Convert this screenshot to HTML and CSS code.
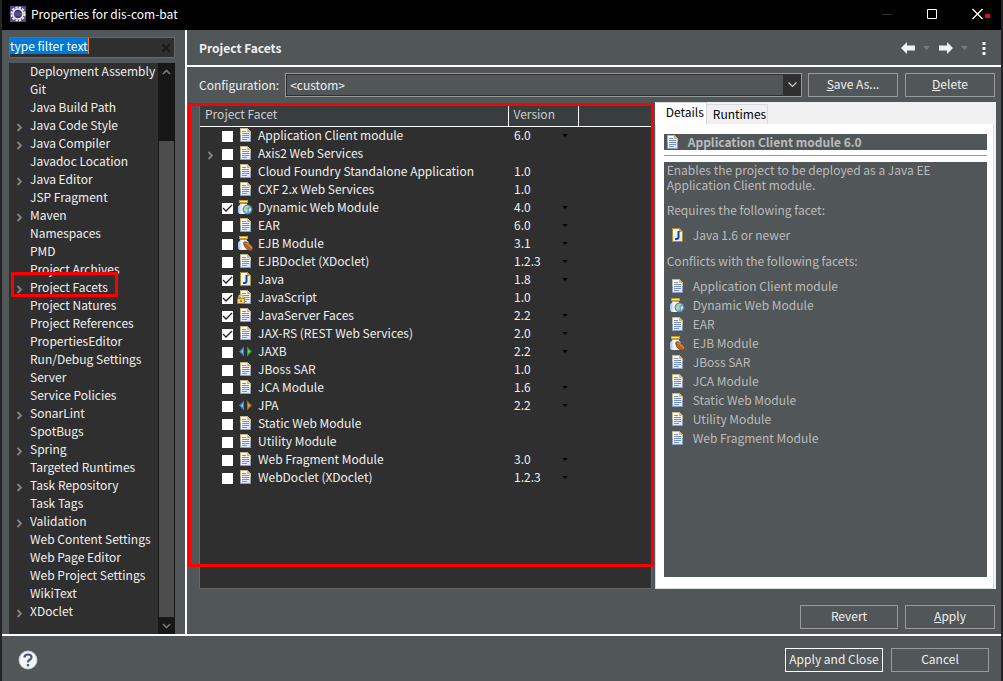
FILE: index.html
```html
<!DOCTYPE html>
<html lang="en">
<head>
<meta charset="utf-8">
<title>Properties for dis-com-bat</title>
<link rel="stylesheet" href="styles.css">
</head>
<body>
<svg width="0" height="0" class="defs" aria-hidden="true">
  <defs>
    <linearGradient id="paper" x1="0" y1="0" x2="1" y2="1"><stop offset="0" stop-color="#fff"/><stop offset="1" stop-color="#d6e2f6"/></linearGradient>
    <linearGradient id="glass" x1="0" y1="0" x2="1" y2="0"><stop offset="0" stop-color="#9fb9e0"/><stop offset=".4" stop-color="#fff"/><stop offset="1" stop-color="#b8cbe8"/></linearGradient>
    <symbol id="doc" viewBox="0 0 16 16"><path d="M3.5 1.5h7l3 3v10h-10z" fill="url(#paper)" stroke="#8c9dc0"/><path d="M3.5 8V1.5h7l3 3V8" fill="none" stroke="#cdb87c"/><path d="M10 1l4 4h-4z" fill="#dcb765"/><path d="M5 4.5h4M5 6.5h7M5 8.500h7M5 10.500h7M5 12.500h5" stroke="#7590c8"/></symbol>
    <symbol id="jar" viewBox="0 0 16 16"><path d="M3 4.500h7v1l2 2v6l-1 1.500H2.500l-1.500-1.500v-6l2-2z" fill="url(#glass)"/><path d="M2 1h9v3H2z" fill="#c89b2c"/><path d="M3 2.500h7" stroke="#fff0ae"/></symbol>
    <symbol id="web" viewBox="0 0 16 16"><use href="#jar"/><circle cx="10.500" cy="10.500" r="4.500" fill="#6ba6d4" stroke="#5a80ac"/><path d="M8 8c2-2 4-1 4 0l-2 1 1 3-2 2-2-3z" fill="#b2d89a"/><path d="M12 10l2-1v2l-2 2z" fill="#d6edc8"/></symbol>
    <symbol id="ejb" viewBox="0 0 16 16"><use href="#jar"/><path d="M7 7c3-1 8 3 9 7-1 2-4 2-6 0-2-1-4-5-3-7z" fill="#ad6429" stroke="#70370f" stroke-width=".7"/><path d="M8 8c3 0 4 4 7 5M10 7c1 3 4 3 5 6" stroke="#d99561" stroke-width=".8" fill="none"/></symbol>
    <symbol id="java" viewBox="0 0 16 16"><path d="M3.500 1.500h7l3 3v10h-10z" fill="url(#paper)" stroke="#b48a35"/><path d="M10 1l4 4h-4z" fill="#d69b2f"/><path d="M9.500 4v6q0 2-2 2H6" fill="none" stroke="#174d86" stroke-width="2"/></symbol>
    <symbol id="lock" viewBox="0 0 16 16"><use href="#doc"/><path d="M2 10V8q0-2 2-2t2 2v2" fill="none" stroke="#d7bd68" stroke-width="1.500"/><path d="M.500 9.500h7v5h-7z" fill="#ead27c" stroke="#a88225"/><path d="M4 11v2" stroke="#614919"/></symbol>
    <symbol id="jaxb" viewBox="0 0 16 16"><path d="M2 8.500l5-5v10z" fill="#4485ca"/><path d="M4 8.500l2-2v4z" fill="#96c2ee"/><path d="M15 8.500l-5-5v10z" fill="#24a638"/><path d="M13 8.500l-2-2v4z" fill="#70d673"/></symbol>
    <symbol id="jpa" viewBox="0 0 16 16"><path d="M2 8.500l5-5v10z" fill="#4485ca"/><path d="M4 8.500l2-2v4z" fill="#96c2ee"/><path d="M15 8.500l-5-5v10z" fill="#a97129"/><path d="M13 8.500l-2-2v4z" fill="#eaac50"/></symbol>
    <symbol id="chev" viewBox="0 0 7 9"><path d="M1.500 1l3.500 3.500L1.500 8" fill="none" stroke="#858585" stroke-width="1.800"/></symbol>
    <symbol id="arrow" viewBox="0 0 14 12"><path d="M0 6l6-6v3.500h8v5H6V12z" fill="#f2f2f2"/></symbol>
    <symbol id="tri" viewBox="0 0 7 4"><path d="M0 0h7L3.500 4z" fill="currentColor"/></symbol>
  </defs>
</svg>
<div class="window">
  <header class="titlebar">
    <svg class="logo" width="16" height="16" viewBox="0 0 16 16"><path fill="#594589" d="M0 0h16v16H0z"/><circle cx="8" cy="8" r="6.500" fill="none" stroke="#eee" stroke-width="2" stroke-dasharray="2.200 1.200"/><circle cx="8" cy="8" r="5" fill="#42376b" stroke="#eee" stroke-width="1.500"/><path d="M4 7h8M4 9h8" stroke="#7e70a8" stroke-width=".8"/></svg>
    <span class="window-name">Properties for dis-com-bat</span>
    <button class="icon-button" aria-label="Minimize"><svg width="10" height="12"><path d="M0 6.500h10" stroke="#333"/></svg></button>
    <button class="icon-button" aria-label="Maximize"><svg width="10" height="10"><path d="M.5.5h9v9h-9z" fill="none" stroke="#fff"/></svg></button>
    <button class="icon-button close" aria-label="Close"><svg width="18" height="12"><path d="M.500 1l10 10M10.500 1l-10 10" stroke="#fff" stroke-width="1.300"/><path d="M13 6h5v4h-5z" fill="#f00"/></svg></button>
  </header>
  <div class="body">
    <aside class="sidebar">
      <div class="filter"><input type="text" value="type filter text" aria-label="Filter" class="filter-input"><button class="icon-button" aria-label="Clear"><svg width="8" height="8"><path d="M.500.500l7 7M7.500.500l-7 7" stroke="#151515" stroke-width="1.400"/></svg></button></div>
      <div class="tree">
        <ul class="tree-list">
          <li><a href="#">Deployment Assembly</a></li>
          <li><a href="#">Git</a></li>
          <li><a href="#">Java Build Path</a></li>
          <li><svg class="chev"><use href="#chev"/></svg><a href="#">Java Code Style</a></li>
          <li><svg class="chev"><use href="#chev"/></svg><a href="#">Java Compiler</a></li>
          <li><a href="#">Javadoc Location</a></li>
          <li><svg class="chev"><use href="#chev"/></svg><a href="#">Java Editor</a></li>
          <li><a href="#">JSP Fragment</a></li>
          <li><svg class="chev"><use href="#chev"/></svg><a href="#">Maven</a></li>
          <li><a href="#">Namespaces</a></li>
          <li><a href="#">PMD</a></li>
          <li><a href="#">Project Archives</a></li>
          <li class="marked"><svg class="chev"><use href="#chev"/></svg><a href="#">Project Facets</a></li>
          <li><a href="#">Project Natures</a></li>
          <li><a href="#">Project References</a></li>
          <li><a href="#">PropertiesEditor</a></li>
          <li><a href="#">Run/Debug Settings</a></li>
          <li><a href="#">Server</a></li>
          <li><a href="#">Service Policies</a></li>
          <li><svg class="chev"><use href="#chev"/></svg><a href="#">SonarLint</a></li>
          <li><a href="#">SpotBugs</a></li>
          <li><svg class="chev"><use href="#chev"/></svg><a href="#">Spring</a></li>
          <li><a href="#">Targeted Runtimes</a></li>
          <li><svg class="chev"><use href="#chev"/></svg><a href="#">Task Repository</a></li>
          <li><a href="#">Task Tags</a></li>
          <li><svg class="chev"><use href="#chev"/></svg><a href="#">Validation</a></li>
          <li><a href="#">Web Content Settings</a></li>
          <li><a href="#">Web Page Editor</a></li>
          <li><a href="#">Web Project Settings</a></li>
          <li><a href="#">WikiText</a></li>
          <li><svg class="chev"><use href="#chev"/></svg><a href="#">XDoclet</a></li>
        </ul>
        <div class="scrollbar">
          <button class="icon-button" aria-label="Scroll up"><svg width="9" height="6"><path d="M1 5l3.500-3.500L8 5" fill="none" stroke="#777" stroke-width="1.600"/></svg></button>
          <div class="thumb"></div>
          <button class="icon-button" aria-label="Scroll down"><svg width="9" height="6"><path d="M1 1l3.500 3.500L8 1" fill="none" stroke="#777" stroke-width="1.600"/></svg></button>
        </div>
      </div>
    </aside>
    <main class="main">
      <div class="page-head">
        <h1>Project Facets</h1>
        <button class="icon-button" aria-label="Back"><svg width="14" height="12"><use href="#arrow"/></svg></button>
        <button class="icon-button drop" aria-label="Back history"><svg width="7" height="4"><use href="#tri"/></svg></button>
        <button class="icon-button" aria-label="Forward"><svg width="14" height="12" class="flip"><use href="#arrow"/></svg></button>
        <button class="icon-button drop" aria-label="Forward history"><svg width="7" height="4"><use href="#tri"/></svg></button>
        <button class="icon-button more" aria-label="More"><svg width="4" height="14"><path d="M.500 1h3v3h-3zM.500 6h3v3h-3zM.500 11h3v3h-3z" fill="#f4f4f4"/></svg></button>
      </div>
      <div class="config">
        <label for="cfg">Configuration:</label>
        <div class="combo"><select id="cfg"><option>&lt;custom&gt;</option></select><svg class="combo-arrow" width="9" height="6"><path d="M.500.500l4 4 4-4" fill="none" stroke="#ccc" stroke-width="1.200"/></svg></div>
        <button class="button"><u>S</u>ave As...</button>
        <button class="button"><u>D</u>elete</button>
      </div>
      <div class="panels">
        <section class="facets">
          <table>
            <colgroup><col class="c-name"><col class="c-version"><col></colgroup>
            <thead><tr><th>Project Facet</th><th>Version</th><th></th></tr></thead>
            <tbody>
              <tr><td><label><input type="checkbox"><svg class="ico"><use href="#doc"/></svg>Application Client module</label></td><td>6.0<svg class="vd"><use href="#tri"/></svg></td><td></td></tr>
              <tr><td><svg class="chev"><use href="#chev"/></svg><label><input type="checkbox"><svg class="ico"><use href="#doc"/></svg>Axis2 Web Services</label></td><td></td><td></td></tr>
              <tr><td><label><input type="checkbox"><svg class="ico"><use href="#doc"/></svg>Cloud Foundry Standalone Application</label></td><td>1.0</td><td></td></tr>
              <tr><td><label><input type="checkbox"><svg class="ico"><use href="#doc"/></svg>CXF 2.x Web Services</label></td><td>1.0</td><td></td></tr>
              <tr><td><label><input type="checkbox" checked><svg class="ico"><use href="#web"/></svg>Dynamic Web Module</label></td><td>4.0<svg class="vd"><use href="#tri"/></svg></td><td></td></tr>
              <tr><td><label><input type="checkbox"><svg class="ico"><use href="#doc"/></svg>EAR</label></td><td>6.0<svg class="vd"><use href="#tri"/></svg></td><td></td></tr>
              <tr><td><label><input type="checkbox"><svg class="ico"><use href="#ejb"/></svg>EJB Module</label></td><td>3.1<svg class="vd"><use href="#tri"/></svg></td><td></td></tr>
              <tr><td><label><input type="checkbox"><svg class="ico"><use href="#doc"/></svg>EJBDoclet (XDoclet)</label></td><td>1.2.3<svg class="vd"><use href="#tri"/></svg></td><td></td></tr>
              <tr><td><label><input type="checkbox" checked><svg class="ico"><use href="#java"/></svg>Java</label></td><td>1.8<svg class="vd"><use href="#tri"/></svg></td><td></td></tr>
              <tr><td><label><input type="checkbox" checked><svg class="ico"><use href="#lock"/></svg>JavaScript</label></td><td>1.0</td><td></td></tr>
              <tr><td><label><input type="checkbox" checked><svg class="ico"><use href="#doc"/></svg>JavaServer Faces</label></td><td>2.2<svg class="vd"><use href="#tri"/></svg></td><td></td></tr>
              <tr><td><label><input type="checkbox" checked><svg class="ico"><use href="#doc"/></svg>JAX-RS (REST Web Services)</label></td><td>2.0<svg class="vd"><use href="#tri"/></svg></td><td></td></tr>
              <tr><td><label><input type="checkbox"><svg class="ico"><use href="#jaxb"/></svg>JAXB</label></td><td>2.2<svg class="vd"><use href="#tri"/></svg></td><td></td></tr>
              <tr><td><label><input type="checkbox"><svg class="ico"><use href="#doc"/></svg>JBoss SAR</label></td><td>1.0</td><td></td></tr>
              <tr><td><label><input type="checkbox"><svg class="ico"><use href="#doc"/></svg>JCA Module</label></td><td>1.6<svg class="vd"><use href="#tri"/></svg></td><td></td></tr>
              <tr><td><label><input type="checkbox"><svg class="ico"><use href="#jpa"/></svg>JPA</label></td><td>2.2<svg class="vd"><use href="#tri"/></svg></td><td></td></tr>
              <tr><td><label><input type="checkbox"><svg class="ico"><use href="#doc"/></svg>Static Web Module</label></td><td></td><td></td></tr>
              <tr><td><label><input type="checkbox"><svg class="ico"><use href="#doc"/></svg>Utility Module</label></td><td></td><td></td></tr>
              <tr><td><label><input type="checkbox"><svg class="ico"><use href="#doc"/></svg>Web Fragment Module</label></td><td>3.0<svg class="vd"><use href="#tri"/></svg></td><td></td></tr>
              <tr><td><label><input type="checkbox"><svg class="ico"><use href="#doc"/></svg>WebDoclet (XDoclet)</label></td><td>1.2.3<svg class="vd"><use href="#tri"/></svg></td><td></td></tr>
            </tbody>
          </table>
        </section>
        <section class="details">
          <div class="tabs"><button class="tab active">Details</button><button class="tab">Runtimes</button></div>
          <div class="tab-page">
            <h2><svg class="ico"><use href="#doc"/></svg>Application Client module 6.0</h2>
            <hr>
            <div class="description">
              <p>Enables the project to be deployed as a Java EE Application Client module.</p>
              <p>Requires the following facet:</p>
              <ul><li><svg class="ico"><use href="#java"/></svg>Java 1.6 or newer</li></ul>
              <p>Conflicts with the following facets:</p>
              <ul>
                <li><svg class="ico"><use href="#doc"/></svg>Application Client module</li>
                <li><svg class="ico"><use href="#web"/></svg>Dynamic Web Module</li>
                <li><svg class="ico"><use href="#doc"/></svg>EAR</li>
                <li><svg class="ico"><use href="#ejb"/></svg>EJB Module</li>
                <li><svg class="ico"><use href="#doc"/></svg>JBoss SAR</li>
                <li><svg class="ico"><use href="#doc"/></svg>JCA Module</li>
                <li><svg class="ico"><use href="#doc"/></svg>Static Web Module</li>
                <li><svg class="ico"><use href="#doc"/></svg>Utility Module</li>
                <li><svg class="ico"><use href="#doc"/></svg>Web Fragment Module</li>
              </ul>
            </div>
          </div>
        </section>
      </div>
      <div class="actions"><button class="button wide">Revert</button><button class="button"><u>A</u>pply</button></div>
    </main>
  </div>
  <footer class="footer">
    <button class="icon-button help" aria-label="Help"><svg width="20" height="20"><circle cx="10" cy="10" r="9" fill="#f4f5f8" stroke="#c3cad6"/><path d="M6.500 7.500q0-3 3.500-3t3.500 2.800q0 1.500-1.800 2.500T10 12.500" fill="none" stroke="#48597c" stroke-width="2.200"/><path d="M8.800 14h2.400v2.400H8.800z" fill="#48597c"/></svg></button>
    <button class="button wide default">Apply and Close</button><button class="button wide">Cancel</button>
  </footer>
</div>
</body>
</html>
```
FILE: styles.css
```css
* { box-sizing: border-box; }
body { margin: 0; background: #242526; color: #f0f0f0; font: 12px/18px "Noto Sans CJK KR", "Open Sans", sans-serif; }
button, input, select { font: inherit; color: inherit; }
ul { list-style: none; margin: 0; padding: 0; }
a { color: inherit; text-decoration: none; }
.defs { position: absolute; }
.window { display: flex; flex-direction: column; min-height: 100vh; margin: 0 2px; background: #515658; }
.icon-button { display: flex; align-items: center; justify-content: center; padding: 0; border: 0; background: none; }

.titlebar { display: flex; align-items: center; height: 30px; padding: 0 11px 2px 8px; background: #000; color: #fff; }
.logo { margin-right: 5px; }
.window-name { flex: 1; }
.titlebar .icon-button { margin-left: 35px; }

.body { display: flex; flex: 1; border-bottom: 2px solid #fff; }
.sidebar { display: flex; flex-direction: column; gap: 5px; width: 185px; padding: 7px 10px 0 7px; border-right: 2px solid #fff; }
.filter { display: flex; align-items: flex-start; height: 21px; padding-right: 4px; border: 1px solid #6a6a6a; background: #2f2f2f; }
.filter-input { field-sizing: content; height: 16px; padding: 0 0 1px; border: 0; border-right: 1px solid #f08020; background: #0078d7; color: #fff; outline: 0; line-height: 15px; }
.filter .icon-button { align-self: center; margin-left: auto; }
.tree { display: flex; flex: 1; background: #2f2f2f; }
.tree-list { flex: 1; padding-bottom: 13px; white-space: nowrap; }
.tree-list li { position: relative; display: flex; align-items: center; height: 18px; padding: 0 0 2px 21px; }
.chev { position: absolute; left: 7px; top: 6px; width: 7px; height: 9px; }
.marked::after { content: ""; position: absolute; inset: -7px 40px 0 2px; border: 3px solid #f00; }
.scrollbar { display: flex; flex-direction: column; width: 17px; border: solid #171717; border-width: 0 1px; background: #171717; }
.scrollbar .icon-button { height: 17px; }
.thumb { flex: 1; margin-top: 61px; background: #4d4d4d; }

.main { display: flex; flex: 1; flex-direction: column; min-width: 0; }
.page-head { display: flex; align-items: center; height: 37px; padding: 1px 15px 0 12px; border-bottom: 2px solid #fff; }
h1 { flex: 1; margin: 0; font-size: 12px; }
.drop { margin: 0 9px 0 8px; color: #777b7d; }
.more { margin-left: 5px; }
.flip { transform: scaleX(-1); }
.config { display: flex; align-items: center; gap: 7px; padding: 6px 6px 5px 12px; }
.combo { position: relative; flex: 1; margin: 0 -1px; }
.combo select { display: block; appearance: none; width: 100%; height: 24px; padding: 0 4px; border: 1px solid #999; border-radius: 0; background: linear-gradient(to left, #2f2f2f 18px, #515658 18px); box-shadow: inset 0 0 0 1px #2f2f2f; }
.combo-arrow { position: absolute; right: 5px; top: 9px; }
.button { width: 90px; height: 24px; padding: 0 0 2px; border: 1px solid #999; border-radius: 0; background: #515658; white-space: nowrap; }
.button.wide { width: 98px; }
.button.default { border-color: #fff; }

.panels { display: flex; flex: 1; gap: 3px; padding: 0 5px 0 12px; }
.facets { position: relative; flex: 453; min-width: 0; margin: 2px 0 -1px; border: 1px solid #666; background: #2f2f2f; }
.facets::after { content: ""; position: absolute; inset: -2px -3px 21px -12px; border: 3px solid #f00; pointer-events: none; }
table { width: 100%; border-collapse: collapse; table-layout: fixed; }
.c-name { width: 308px; }
.c-version { width: 70px; }
th { height: 21px; padding: 0 5px 2px; border-bottom: 1px solid #fff; border-right: 1px solid #fff; background: #383d3f; color: #ccc; font-weight: 400; text-align: left; }
th:last-child { border-right: 0; }
td { position: relative; height: 18px; padding: 0 6px; line-height: 16px; vertical-align: top; }
td:first-child { padding: 0 0 0 22px; }
td label { display: flex; align-items: center; height: 18px; padding-bottom: 2px; white-space: nowrap; }
input[type="checkbox"] { appearance: none; width: 11px; height: 11px; margin: 3px 4px 0 0; background: #fff; }
input[type="checkbox"]:checked { background: #fff url("data:image/svg+xml,%3Csvg xmlns='http://www.w3.org/2000/svg' width='11' height='11'%3E%3Cpath d='M1 5l3 3 6-6' fill='none' stroke='%23222' stroke-width='1.300'/%3E%3C/svg%3E"); }
.ico { flex: none; width: 16px; height: 16px; margin-right: 5px; }
.vd { position: absolute; right: 10px; top: 7px; width: 6px; height: 3px; color: #000; }

.details { display: flex; flex: 341; flex-direction: column; min-width: 0; margin-bottom: -1px; padding-right: 2px; background: #f0f0f0; color: #000; }
.tabs { display: flex; align-items: flex-end; height: 22px; padding-left: 1px; }
.tab { height: 20px; padding: 0 1px 2px 6px; border: 1px solid #d9d9d9; border-width: 1px 1px 0 0; background: #f0f0f0; }
.tab.active { height: 22px; padding: 0 2px 4px 10px; background: #fff; line-height: 17px; }
.tab-page { display: flex; flex: 1; flex-direction: column; padding: 9px 6px 11px 8px; border: 1px solid #d9d9d9; border-top-color: #fff; background: #fff; color: #bbb; }
h2 { display: flex; align-items: center; height: 16px; margin: 0; font-size: 12px; line-height: 16px; background: #515658; }
h2 .ico { margin-right: 8px; }
hr { width: 100%; margin: 5px 0 6px; border: 0; border-top: 1px solid #999; }
.description { flex: 1; padding: 0 3px; background: #515658; line-height: 15px; }
.description p { margin: 0 0 10px; }
.description ul { margin: -2px 0 9px 2px; }
.description li { display: flex; align-items: center; height: 19px; line-height: 19px; }
.description .ico { margin-right: 8px; }
.actions { display: flex; justify-content: flex-end; gap: 7px; padding: 17px 6px 5px; }
.footer { display: flex; align-items: center; gap: 8px; height: 45px; padding: 3px 12px 0 16px; }
.help { margin-right: auto; }
```
